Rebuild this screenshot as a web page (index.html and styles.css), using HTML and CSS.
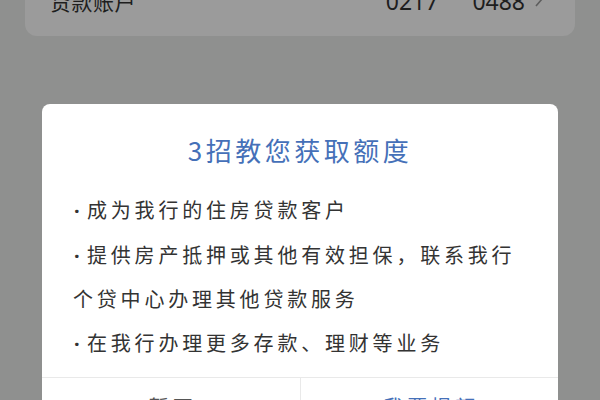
FILE: index.html
```html
<!DOCTYPE html>
<html lang="zh-CN">
<head>
<meta charset="utf-8">
<title>3招教您获取额度</title>
<link rel="stylesheet" href="styles.css">
</head>
<body>
<div class="page">
  <div class="account-card">
    <span class="acct-label">贷款账户</span>
    <span class="acct-num"><span>0217</span><span>0488</span></span>
    <svg class="chevron" width="10" height="16" viewBox="0 0 10 16"><path d="M2 1 L8 8 L2 15" fill="none" stroke="#5e5e5e" stroke-width="1.6"/></svg>
  </div>
  <div class="dialog">
    <h2 class="dialog-title">3招教您获取额度</h2>
    <ul class="tips">
      <li><span class="dot">·</span>成为我行的住房贷款客户</li>
      <li><span class="dot">·</span>提供房产抵押或其他有效担保，联系我行个贷中心办理其他贷款服务</li>
      <li><span class="dot">·</span>在我行办理更多存款、理财等业务</li>
    </ul>
    <div class="actions">
      <button class="btn btn-cancel">暂不</button>
      <button class="btn btn-ok">我要提额</button>
    </div>
  </div>
</div>
</body>
</html>
```
FILE: styles.css
```css
html, body {
  margin: 0;
  padding: 0;
}
body {
  width: 600px;
  height: 400px;
  overflow: hidden;
  background: #8f908f;
  font-family: "Noto Sans CJK SC", "Noto Sans", sans-serif;
}
.page {
  display: flex;
  flex-direction: column;
}
.account-card {
  margin: -40px 25px 0;
  height: 76px;
  box-sizing: border-box;
  padding: 27px 31px 0 25px;
  background: #9b9b9b;
  border-radius: 12px;
  display: flex;
  align-items: flex-start;
}
.acct-label {
  font-size: 21px;
  line-height: 28px;
  letter-spacing: 0.5px;
  color: #1e1e1e;
}
.acct-num {
  margin-left: auto;
  display: flex;
  gap: 34px;
  font-family: "Noto Sans", sans-serif;
  font-size: 23px;
  line-height: 28px;
  color: #1e1e1e;
}
.chevron {
  margin: 4px 0 0 9px;
}
.dialog {
  margin: 68px 42px 0;
  background: #fff;
  border-radius: 8px;
  overflow: hidden;
}
.dialog-title {
  margin: 0;
  padding-top: 28px;
  font-size: 26px;
  line-height: 36px;
  font-weight: normal;
  letter-spacing: 3.5px;
  text-align: center;
  color: #4570b8;
}
.tips {
  list-style: none;
  margin: 20px 0 0;
  padding: 0 30px 12px 31px;
  font-size: 20px;
  line-height: 43.5px;
  letter-spacing: 3.8px;
  color: #333;
}
.tips li {
  margin: 0;
}
.dot {
  display: inline-block;
  width: 14px;
  padding-left: 1px;
  box-sizing: border-box;
  letter-spacing: 0;
  font-family: "Noto Sans", sans-serif;
  font-weight: bold;
}
.actions {
  display: flex;
  border-top: 1px solid #e9e9e9;
}
.btn {
  flex: 1;
  height: 56px;
  border: 0;
  background: #fff;
  font-family: "Noto Sans CJK SC", "Noto Sans", sans-serif;
  font-size: 20px;
  letter-spacing: 3.8px;
  padding: 0 0 0 3.8px;
}
.btn-cancel {
  color: #555;
}
.btn-ok {
  color: #4570b8;
  border-left: 1px solid #e9e9e9;
}
```
